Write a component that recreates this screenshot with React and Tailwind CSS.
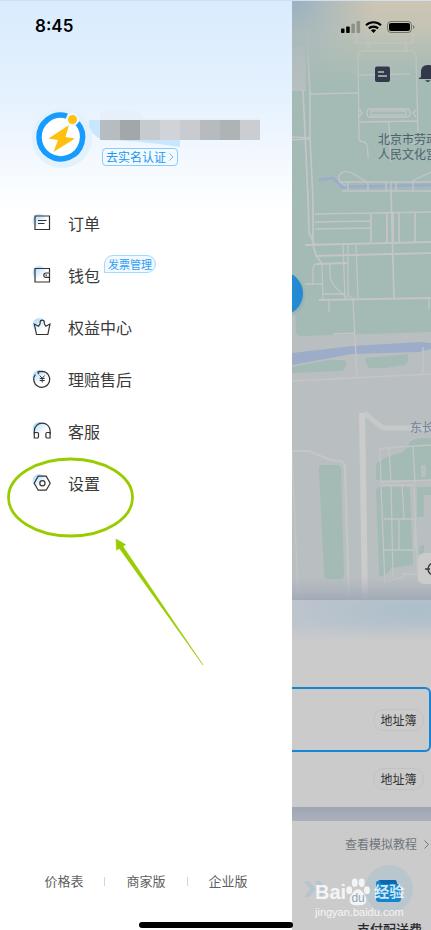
import React from "react";

const menu = [
  { label: "订单", icon: "order" },
  { label: "钱包", icon: "wallet", tag: "发票管理" },
  { label: "权益中心", icon: "crown" },
  { label: "理赔售后", icon: "refund" },
  { label: "客服", icon: "headset" },
  { label: "设置", icon: "gear" },
];

const shapes = {
  order: (
    <>
      <path d="M4 4h14.500v13.500H4z" />
      <path d="M7 8.500h8.500M7 11.500h6.500" />
    </>
  ),
  wallet: (
    <>
      <path d="M18.500 8.500V4.500H4V18h14.500v-4.500" />
      <path d="M18.500 9h-3.500a2.200 2.200 0 0 0 0 4.400h3.500zM14.500 11.200h1.500" />
    </>
  ),
  crown: (
    <path d="M3.300 8 5.500 18.500h11.300L19 8l-4.200 2.200-1.500-2.500V6.200a2.100 2.100 0 1 0-4.200 0v1.500l-1.600 2.500z" />
  ),
  refund: (
    <>
      <path d="M4.300 6.500A8 8 0 1 0 11.200 3.300C9.500 3.300 8 3.700 6.500 4.300M6.500 4.300l2.200-1.300M6.500 4.300l1.500 1.700" />
      <path d="m8.700 7.500 2.500 2.800 2.500-2.800M11.200 10.300v4.200M8.700 10.500h5M8.700 12.500h5" strokeWidth="1" />
    </>
  ),
  headset: (
    <>
      <path d="M3.300 14v-3a7.900 7.900 0 0 1 15.800 0v3" />
      <path d="M3.300 12.500h3a1.200 1.200 0 0 1 1.200 1.200v3.100A1.200 1.200 0 0 1 6.300 18h-3zM19.100 12.500h-3a1.200 1.200 0 0 0-1.200 1.200v3.100a1.200 1.200 0 0 0 1.200 1.200h3z" />
    </>
  ),
  gear: (
    <>
      <path d="M7.200 4.200h8l4 7-4 7h-8l-4-7z" />
      <circle cx="11.400" cy="11.200" r="2.600" />
    </>
  ),
};

function MenuIcon({ name }) {
  return (
    <svg
      viewBox="0 0 22 22"
      className="size-[22px]"
      fill="none"
      stroke="#333"
      strokeWidth="1.2"
      aria-hidden="true"
    >
      <defs>
        <linearGradient id={`dot-${name}`} x1="0" y1="0" x2="0.8" y2="1">
          <stop offset="0" stopColor="#9fd4fb" />
          <stop offset="0.8" stopColor="#fff" />
        </linearGradient>
      </defs>
      <circle cx="8.500" cy="9" r="7" fill={`url(#dot-${name})`} stroke="none" />
      {shapes[name]}
    </svg>
  );
}

function Avatar() {
  return (
    <svg viewBox="0 0 60 60" className="size-[60px] shrink-0" role="img" aria-label="头像">
      <circle cx="30" cy="30" r="30" fill="#e3f1fd" />
      <circle cx="30" cy="30" r="23" fill="#fff" />
      <path d="M35 8.100A21.800 21.800 0 1 0 45.500 15" fill="none" stroke="#179bff" strokeWidth="5.500" />
      <circle cx="40.500" cy="11.500" r="6.500" fill="#f0f7fe" />
      <circle cx="40.500" cy="11.500" r="4.500" fill="#ffc010" />
      <path d="M37 17 16.500 30.500l9.500 1.500-4.500 12L43 30.500l-9.500-1.500z" fill="#ffc010" />
    </svg>
  );
}

function MapDrawing() {
  return (
    <svg
      viewBox="292 0 139 600"
      preserveAspectRatio="xMinYMin slice"
      className="absolute inset-0 size-full"
      aria-hidden="true"
    >
      <defs>
        <linearGradient id="sky" x1="0" y1="0" x2="0" y2="1">
          <stop offset="0" stopColor="#cdc5b3" />
          <stop offset="0.3" stopColor="#c9c5b5" stopOpacity="0.85" />
          <stop offset="1" stopColor="#a3bab5" stopOpacity="0" />
        </linearGradient>
        <radialGradient id="corner" gradientUnits="userSpaceOnUse" cx="292" cy="0" r="85">
          <stop offset="0" stopColor="#97b0c2" />
          <stop offset="1" stopColor="#a3b8bd" stopOpacity="0" />
        </radialGradient>
        <linearGradient id="fade" x1="0" y1="0" x2="0" y2="1">
          <stop offset="0" stopColor="#a9b0bb" stopOpacity="0" />
          <stop offset="1" stopColor="#a2aab7" />
        </linearGradient>
      </defs>
      <path fill="#b9bfc1" d="M292 0h139v600H292z" />
      <g fill="#a3bab5">
        <path d="M292 0h139v332l-130 4q-5 0-5-6l-1-20-3-4z" />
        <path d="m292 367 36-7h14q5 0 4 5-1 6-6 6l-48 2zM365 358l43-4q1 8-3 11l-20 3h-15q-4-2-5-10z" />
        <path d="M322 465h15q4 0 4 4l3 106q0 4-4 4h-12q-4 0-4-4l-5-106q0-4 3-4z" />
        <path d="M376 480v-15q1-5 27-13l8-11 7-3h13v42z" />
        <path d="M378 487h30q2 0 2 3l3 75-21 3-8 8q-7 2-5-5l-3-80zM417 487h14v8h-7v22h-7zM419 547l5-2v12h-5z" />
      </g>
      <path fill="#b9bfc1" d="M292 48q8-5 13 0l1 43h-14zM421 465h5v12h-5z" />
      <path d="m292 353 60-7 67-4 12 1v6l-12 3-67 2-60 11z" fill="#9dadc9" />
      <path d="m319 180 14-2 9 9 89-2" stroke="#9dadc9" strokeWidth="3" fill="none" />
      <g fill="none" stroke="#c4c5c7" strokeWidth="1.3">
        <path d="m307 30 3 63v44l3 63v45l3 10 6 9M303 90l2 43 3 66 1 34 6 12" strokeWidth="1.700" />
        <path d="m310 94 48-1M292 137l18 1M292 140l18-1M356 33v10h57V33M368 43v8M406 43v8" strokeWidth="1.700" />
        <path d="M359 138 358 56q0-5 5-5h47q6 0 6 6l2 76M358 75l52-1M359 122l59-1M389 122l2 39M359 138q0 4 5 4 4 0 4 16M412 135v8h10" />
        <rect x="367" y="109" width="43" height="8" rx="3" />
        <rect x="371" y="111" width="35" height="4" />
        <path d="m359 109 3 4-3 4M416 110l-3 3 3 4M368 183l-16-10q-10-4-13 3-2 5 7 10M339 182h92M342 191h89M412 181l19-9M348 182v9M368 182v9M386 182v9M391 182v9M396 182v9M413 182v9" />
        <path d="m391 190 3 108M315 214l116-2M315 222l56-1M315 229l56-1M371 214v28M387 213v29M393 213v29M399 213v29M415 213v29" strokeWidth="1.700" />
        <path d="m305 245 126-3M315 256l116-3M317 264l30-1M319 300l112-2" strokeWidth="1.800" />
        <path d="m343 245 2 54M348 245v50l6 5M356 245l2 53M313 284v-15q0-5 4-5h5l1 35M305 284h17M330 264v12q1 10 18 22M323 294h22M329 300v12M353 300l4 78M333 334l22-1M429 299v10M292 381l139-7M423 347v28" />
        <path d="M380 452v-1q-1-3 5-3l46-3M380 452l1 30 50-2M389 448l2 34M413 446l2 37M381 485l4 102M381 485h33l4 100M391 484l2 94M402 484l2 35M384 519h31v28q0 3-3 3h-28M399 520v30M385 581l18-3v-4h16" />
        <path d="m292 452 6 142v6M298 592h51M426 593v7" />
      </g>
      <path d="M292 451h17l21 9 11 1q4 2 4 8l4 131" fill="none" stroke="#c4c6c7" strokeWidth="2.200" />
      <path d="m364 413 19 15h48" fill="none" stroke="#c6c9ca" strokeWidth="5" />
      <path d="M359 413h6l3 187h-6z" fill="#cbcbcb" />
      <path d="M292 0h139v100H292z" fill="url(#sky)" />
      <path d="M292 0h139v100H292z" fill="url(#corner)" />
      <path d="M292 576h139v24H292z" fill="url(#fade)" />
      <circle cx="281" cy="295" r="24" fill="#92a9af" opacity="0.5" />
      <circle cx="281" cy="293.500" r="22" fill="#248ad1" />
    </svg>
  );
}

function StatusIcons() {
  return (
    <svg viewBox="0 0 74 14" className="h-[14px] w-[74px]" role="img" aria-label="信号、无线网络、电池">
      <rect y="8.500" width="3.500" height="4.500" rx="0.800" />
      <rect x="5.200" y="6.500" width="3.500" height="6.500" rx="0.800" />
      <rect x="10.400" y="3.800" width="3.500" height="9.200" rx="0.800" opacity="0.25" />
      <rect x="15.600" y="1" width="3.500" height="12" rx="0.800" opacity="0.25" />
      <g fill="none" stroke="#000" strokeWidth="2.100">
        <path d="M25 5.200a11 11 0 0 1 15 0M27.800 8.400a7 7 0 0 1 9.400 0" />
      </g>
      <path d="m32.500 13-2.600-2.700a4 4 0 0 1 5.200 0z" />
      <rect x="46.500" y="1.500" width="24" height="11" rx="3.500" fill="none" stroke="#000" strokeOpacity="0.4" />
      <rect x="48" y="3" width="21" height="8" rx="2" />
      <path d="M72 5v4q1.500-.5 1.500-2T72 5z" opacity="0.4" />
    </svg>
  );
}

function AddressButton() {
  return (
    <button className="h-[22px] w-[51px] rounded-full border border-[#c2c2c2] text-[12px] leading-none text-[#333]">
      地址簿
    </button>
  );
}

function Watermark() {
  return (
    <div className="pointer-events-none text-white/80">
      <div className="flex h-7 items-center font-['Liberation_Sans','Noto_Sans_CJK_SC',sans-serif] font-bold">
        <span className="text-[20px] leading-7">Bai</span>
        <span className="relative flex h-7 w-6 items-end justify-center">
          <svg viewBox="0 0 26 30" className="absolute inset-0 size-full" fill="#f2f4f6" aria-hidden="true">
            <ellipse cx="3.500" cy="13" rx="3.200" ry="4.200" />
            <ellipse cx="9.500" cy="5" rx="3.200" ry="4.500" />
            <ellipse cx="17" cy="5" rx="3.200" ry="4.500" />
            <ellipse cx="22.700" cy="13" rx="3.200" ry="4.200" />
            <path d="M13 12c3 0 5 3 7 6 3 3 3 10-2 11-3 .5-7 .5-10 0-5-1-5-8-2-11 2-3 4-6 7-6z" />
          </svg>
          <span className="relative text-[12px] leading-4 font-normal text-[#8fa5b5]">du</span>
        </span>
        <span className="ml-1 text-[15px] leading-7">经验</span>
      </div>
      <div className="font-['Liberation_Sans',sans-serif] text-[11px] leading-3">jingyan.baidu.com</div>
    </div>
  );
}

function Drawer() {
  return (
    <aside className="relative flex min-w-0 flex-1 flex-col bg-white">
      <div className="absolute inset-x-0 top-0 h-[210px] bg-linear-to-b from-[#d9ebfe] via-[#e4f1fe] via-45% to-white" />
      <div className="relative flex h-[54px] items-center pl-[35px] font-['Inter',sans-serif] text-[17px] font-semibold text-black">
        8:45
      </div>
      <div className="relative mt-[54px] flex h-[89px] items-start gap-1 pl-8">
        <Avatar />
        <div className="relative pt-3">
          <svg viewBox="0 0 174 40" className="absolute top-0 -left-2 h-10 w-[174px]" aria-hidden="true">
            <path d="M12 4q17-4 40 0l3 6h117v12H12z" fill="#e6effa" />
            <path d="M1 12h14v20Q0 26 1 12zM12 28h80v11Q50 32 12 32z" fill="#c9e6ff" />
          </svg>
          <div className="relative ml-1 flex h-5">
            <span className="w-5 bg-[#b7bcc0]" />
            <span className="w-5 bg-[#a2a7aa]" />
            <span className="w-5 bg-[#c6cbcf]" />
            <span className="w-5 bg-[#d0d4d9]" />
            <span className="w-5 bg-[#c8ccd1]" />
            <span className="w-5 bg-[#b7bbbf]" />
            <span className="w-5 bg-[#aeb3b6]" />
            <span className="w-5 bg-[#cacdd2]" />
          </div>
          <button className="relative mt-2 ml-[6px] flex h-[18px] items-center gap-[3px] rounded border border-[#8accfb] bg-[#f2f9ff] px-[3px] text-[12px] leading-none text-[#1a97f0]">
            去实名认证
            <svg viewBox="0 0 5 8" className="h-2 w-[5px]" fill="none" stroke="#6fbdf5" aria-hidden="true">
              <path d="m.5.5 3.500 3.500L.5 7.500" />
            </svg>
          </button>
        </div>
      </div>

      <nav className="relative flex flex-col">
        {menu.map((item) => (
          <a key={item.label} href="#" className="flex h-[52px] items-center pl-[31px] text-[16px] text-[#3a3a3a]">
            <MenuIcon name={item.icon} />
            <span className="ml-[15px] leading-6">{item.label}</span>
            {item.tag && (
              <span className="mb-[22px] ml-1 h-[18px] rounded-full rounded-bl-none border border-[#a5d8fc] bg-[#f1f9ff] px-[3px] text-[11px] leading-4 text-[#2e9ff2]">
                {item.tag}
              </span>
            )}
          </a>
        ))}
      </nav>

      <footer className="mt-auto mb-[39px] flex h-5 items-center justify-center gap-[21px] text-[13px] text-[#606060]">
        <a href="#">价格表</a>
        <span className="h-[9px] w-px bg-[#d4d4d4]" />
        <a href="#">商家版</a>
        <span className="h-[9px] w-px bg-[#d4d4d4]" />
        <a href="#">企业版</a>
      </footer>

      <svg
        viewBox="0 0 220 230"
        className="pointer-events-none absolute top-[450px] left-0 h-[230px] w-[220px]"
        aria-hidden="true"
      >
        <ellipse cx="70.500" cy="47.500" rx="62" ry="38.500" fill="none" stroke="#99cc00" strokeWidth="2.800" />
        <path d="m116 89 9.500 5.500-2.500 2 80 118.500-83.500-116.500-3 1.500z" fill="#99cc00" stroke="#99cc00" strokeWidth="0.600" />
      </svg>
    </aside>
  );
}

function Home() {
  return (
    <main className="flex w-[139px] shrink-0 flex-col overflow-hidden bg-[#cbcbcb]">
      <section className="relative h-[600px] shrink-0 overflow-hidden">
        <MapDrawing />
        <div className="relative flex h-[54px] items-center pl-[49px]">
          <StatusIcons />
        </div>
        <div className="relative mt-[11px] flex w-40 gap-7 pl-[82px]">
          <button aria-label="订单消息">
            <svg viewBox="0 0 17 17" className="size-[17px]" aria-hidden="true">
              <rect x="1" y="0.500" width="15" height="15.500" rx="2" fill="#33384a" />
              <path d="M4 6h6M4 10h9" stroke="#b7c0ba" strokeWidth="1.400" />
            </svg>
          </button>
          <button aria-label="通知">
            <svg viewBox="0 0 18 18" className="size-[18px]" fill="#33384a" aria-hidden="true">
              <path d="M9 0c5 0 7 3 7 7v5l2 1v1H0v-1l2-1V7c0-4 2-7 7-7zM6 15.300h5.500Q9 18.700 6 15.300z" />
            </svg>
          </button>
        </div>
        <p className="absolute top-[131px] left-[86px] text-[12px] leading-[15px] whitespace-nowrap text-[#4c626d]">
          北京市劳动
          <br />
          人民文化宫
        </p>
        <span className="absolute top-[419px] left-[118px] text-[12px] leading-4 whitespace-nowrap text-[#73849d]">
          东长安街
        </span>
        <button
          aria-label="定位"
          className="absolute top-[553px] left-[126px] flex size-[31px] items-center justify-center rounded-md bg-[#cbcbcb]"
        >
          <svg viewBox="0 0 18 18" className="size-[18px]" fill="none" stroke="#383b42" strokeWidth="1.400" aria-hidden="true">
            <circle cx="9" cy="9" r="6" />
            <path d="M0 9h5M13 9h5M9 0v5M9 13v5" />
          </svg>
        </button>
      </section>

      <section className="flex h-[207px] shrink-0 flex-col">
        <div className="h-10 shrink-0 bg-[radial-gradient(ellipse_at_90%_25%,#acbfcb,#bac3cc_60%,#c5c8cc)]">
          <div className="h-full bg-linear-to-b from-transparent from-60% to-[#c8cacb]" />
        </div>
        <div className="mt-[47px] flex h-[65px] items-center justify-end rounded-r-md border-y-2 border-r-2 border-[#1685d5] pr-[5px]">
          <AddressButton />
        </div>
        <div className="flex h-[54px] items-center justify-end pr-[7px]">
          <AddressButton />
        </div>
      </section>
      <div className="h-[14px] shrink-0 bg-linear-to-b from-[#9ea6b2] to-[#acb0bc]" />

      <section className="flex flex-1 flex-col">
        <a href="#" className="mt-[15px] flex h-4 items-center justify-end gap-[7px] pr-[2px] text-[12px] whitespace-nowrap text-[#70757b]">
          查看模拟教程
          <svg viewBox="0 0 5 9" className="h-[9px] w-[5px]" fill="none" stroke="#70757b" aria-hidden="true">
            <path d="m.5.500 4 4-4 4" />
          </svg>
        </a>
        <div className="mt-[13px] flex items-center gap-[37px] pl-3">
          <svg viewBox="0 0 24 18" className="h-[18px] w-6" fill="#b5c5cf" aria-hidden="true">
            <path d="M0 1h5l7 8-7 8H0l6-8zM11 1h5l7 8-7 8h-5l6-8z" />
          </svg>
          <svg viewBox="0 0 48 48" className="size-12" aria-hidden="true">
            <circle cx="24" cy="24" r="24" fill="#b9c6ce" />
            <path d="M13 17q0-2 2-2h15q2 0 2 4H13z" fill="#0b68ae" />
            <path d="M11 18q0-2 2-2h2q0 3 3 3h16q2 0 2 2v13q0 3-3 3H14q-3 0-3-3z" fill="#1185cd" />
          </svg>
        </div>
        <p className="mt-2 pl-[65px] text-[13px] leading-4 font-medium whitespace-nowrap text-[#27292d]">支付配送费</p>
      </section>
    </main>
  );
}

export default function App() {
  return (
    <div className="relative flex h-screen overflow-hidden font-['Noto_Sans_CJK_SC',sans-serif]">
      <Drawer />
      <Home />
      <div className="absolute inset-x-0 top-0 h-px bg-[#cfdfee]" />
      <div className="absolute right-[25px] bottom-[12px] w-[91px]">
        <Watermark />
      </div>
      <div className="absolute bottom-[2px] left-1/2 h-[6px] w-[154px] -translate-x-1/2 rounded-full bg-black" />
    </div>
  );
}
